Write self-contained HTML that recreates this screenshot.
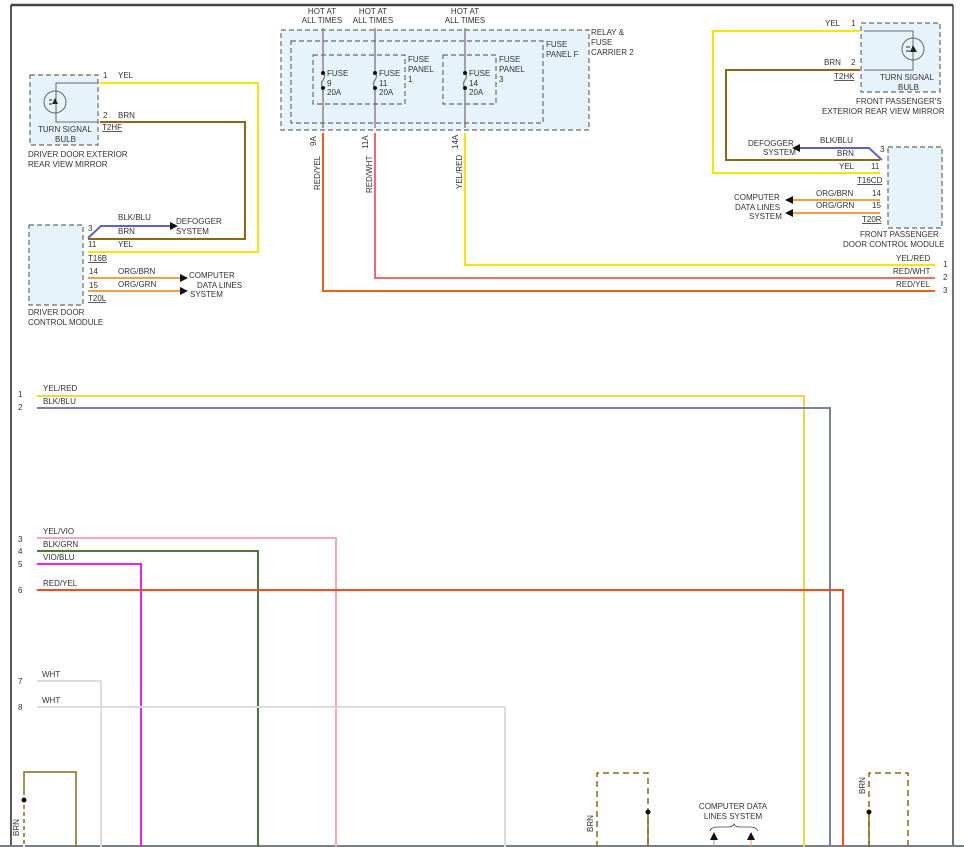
<!DOCTYPE html>
<html><head><meta charset="utf-8"><style>
html,body{margin:0;padding:0;background:#fff;}
svg{display:block;font-family:"Liberation Sans",sans-serif;font-size:8px;fill:#333;}
text{fill:#333;}
.bx{fill:#e6f3fb;stroke:#6a6a6a;stroke-width:1.2;stroke-dasharray:5,3;}
.bn{fill:none;stroke:#6a6a6a;stroke-width:1.2;stroke-dasharray:5,3;}
.w{fill:none;stroke-width:2;}
</style></head><body>
<svg width="964" height="847" viewBox="0 0 964 847" xmlns="http://www.w3.org/2000/svg">
<!-- frame -->
<line x1="11" y1="5" x2="953" y2="5" stroke="#444" stroke-width="2.5"/>
<line x1="11" y1="5" x2="11" y2="847" stroke="#222" stroke-width="1.5"/>
<line x1="953" y1="5" x2="953" y2="847" stroke="#444" stroke-width="1.5"/>
<line x1="0" y1="846" x2="964" y2="846" stroke="#7a8088" stroke-width="2"/>

<!-- Driver mirror -->
<rect class="bx" x="30" y="75" width="68" height="70"/>
<polyline points="98,83 56,83 56,122 98,122" fill="none" stroke="#666" stroke-width="1"/>
<circle cx="55" cy="102" r="11" fill="none" stroke="#666" stroke-width="1"/>
<polygon points="52,104 58,104 55,98" fill="#222"/><line x1="49" y1="100" x2="52" y2="100" stroke="#222"/><line x1="49" y1="104" x2="52" y2="104" stroke="#222"/>
<text x="38" y="132">TURN SIGNAL</text><text x="55" y="142">BULB</text>
<text x="28" y="157">DRIVER DOOR EXTERIOR</text><text x="28" y="167">REAR VIEW MIRROR</text>
<text x="103" y="78">1</text><text x="118" y="78">YEL</text>
<text x="103" y="118">2</text><text x="118" y="118">BRN</text>
<text x="102" y="130" text-decoration="underline">T2HF</text>
<polyline class="w" stroke="#f7e600" points="100,83 258,83 258,252 88,252"/>
<polyline class="w" stroke="#8a6a10" points="100,122 245,122 245,239 88,239"/>

<!-- Driver DCM -->
<rect class="bx" x="29" y="225" width="54" height="80"/>
<polyline class="w" stroke="#6060c0" points="88,238 101,226 170,226"/>
<polygon points="170,222 178,226 170,230" fill="#111"/>
<text x="88" y="231">3</text><text x="118" y="220">BLK/BLU</text><text x="118" y="234">BRN</text>
<text x="176" y="224">DEFOGGER</text><text x="176" y="234">SYSTEM</text>
<text x="88" y="247">11</text><text x="118" y="247">YEL</text>
<text x="88" y="261" text-decoration="underline">T16B</text>
<text x="89" y="274">14</text><text x="118" y="274">ORG/BRN</text>
<text x="89" y="288">15</text><text x="118" y="287">ORG/GRN</text>
<polyline class="w" stroke="#f5a040" points="88,278 180,278"/>
<polyline class="w" stroke="#f5a040" points="88,291 180,291"/>
<polygon points="180,274 188,278 180,282" fill="#111"/><polygon points="180,287 188,291 180,295" fill="#111"/>
<text x="189" y="278">COMPUTER</text><text x="197" y="288">DATA LINES</text><text x="190" y="297">SYSTEM</text>
<text x="88" y="301" text-decoration="underline">T20L</text>
<text x="28" y="315">DRIVER DOOR</text><text x="28" y="325">CONTROL MODULE</text>

<!-- Fuse carrier -->
<rect class="bx" x="281" y="30" width="308" height="100"/>
<rect class="bn" x="291" y="41" width="252" height="82"/>
<rect class="bn" x="313" y="55" width="92" height="49"/>
<rect class="bn" x="443" y="55" width="53" height="49"/>
<g stroke="#777" stroke-width="1.3" fill="none">
<line x1="323" y1="28" x2="323" y2="73"/><line x1="323" y1="88" x2="323" y2="128"/>
<line x1="375" y1="28" x2="375" y2="73"/><line x1="375" y1="88" x2="375" y2="128"/>
<line x1="465" y1="28" x2="465" y2="73"/><line x1="465" y1="88" x2="465" y2="128"/>
<path d="M323,73 q3,3 0,7 q-3,4 0,8"/><path d="M375,73 q3,3 0,7 q-3,4 0,8"/><path d="M465,73 q3,3 0,7 q-3,4 0,8"/></g>
<g fill="#111"><circle cx="323" cy="73" r="2"/><circle cx="323" cy="88" r="2"/><circle cx="375" cy="73" r="2"/><circle cx="375" cy="88" r="2"/><circle cx="465" cy="73" r="2"/><circle cx="465" cy="88" r="2"/></g>
<g text-anchor="middle"><text x="322" y="14">HOT AT</text><text x="322" y="23">ALL TIMES</text>
<text x="373" y="14">HOT AT</text><text x="373" y="23">ALL TIMES</text>
<text x="465" y="14">HOT AT</text><text x="465" y="23">ALL TIMES</text></g>
<text x="327" y="76">FUSE</text><text x="327" y="86">9</text><text x="327" y="95">20A</text>
<text x="379" y="76">FUSE</text><text x="379" y="86">11</text><text x="379" y="95">20A</text>
<text x="469" y="76">FUSE</text><text x="469" y="86">14</text><text x="469" y="95">20A</text>
<text x="408" y="62">FUSE</text><text x="408" y="72">PANEL</text><text x="408" y="82">1</text>
<text x="499" y="62">FUSE</text><text x="499" y="72">PANEL</text><text x="499" y="82">3</text>
<text x="546" y="47">FUSE</text><text x="546" y="57">PANEL F</text>
<text x="591" y="35">RELAY &amp;</text><text x="591" y="45">FUSE</text><text x="591" y="55">CARRIER 2</text>
<text transform="translate(316,146) rotate(-90)">9A</text>
<text transform="translate(320,190) rotate(-90)">RED/YEL</text>
<text transform="translate(368,149) rotate(-90)">11A</text>
<text transform="translate(372,193) rotate(-90)">RED/WHT</text>
<text transform="translate(458,149) rotate(-90)">14A</text>
<text transform="translate(462,189) rotate(-90)">YEL/RED</text>
<polyline class="w" stroke="#f4601a" points="323,133 323,291 935,291"/>
<polyline class="w" stroke="#f26a6a" points="375,133 375,278 935,278"/>
<polyline class="w" stroke="#f7e600" points="465,133 465,265 935,265"/>
<text x="896" y="261">YEL/RED</text><text x="943" y="267">1</text>
<text x="893" y="274">RED/WHT</text><text x="943" y="280">2</text>
<text x="896" y="287">RED/YEL</text><text x="943" y="293">3</text>

<!-- Right mirror -->
<rect class="bx" x="861" y="23" width="79" height="69"/>
<polyline points="864,31 913,31 913,70 864,70" fill="none" stroke="#666" stroke-width="1"/>
<circle cx="913" cy="49" r="11" fill="none" stroke="#666" stroke-width="1"/>
<polygon points="910,52 917,52 913,45" fill="#222"/><line x1="906" y1="47" x2="910" y2="47" stroke="#222"/><line x1="906" y1="51" x2="910" y2="51" stroke="#222"/>
<polyline class="w" stroke="#f7e600" points="860,31 713,31 713,173 880,173"/>
<polyline class="w" stroke="#8a6a10" points="860,70 726,70 726,160 880,160"/>
<text x="825" y="26">YEL</text><text x="851" y="26">1</text>
<text x="824" y="65">BRN</text><text x="851" y="65">2</text>
<text x="834" y="79" text-decoration="underline">T2HK</text>
<text x="880" y="80">TURN SIGNAL</text><text x="898" y="90">BULB</text>
<text x="856" y="104">FRONT PASSENGER'S</text><text x="822" y="114">EXTERIOR REAR VIEW MIRROR</text>

<!-- Right DCM -->
<rect class="bx" x="888" y="147" width="54" height="81"/>
<polyline class="w" stroke="#6060c0" points="882,160 869,148 800,148"/>
<polygon points="800,144 792,148 800,152" fill="#111"/>
<text x="820" y="143">BLK/BLU</text><text x="837" y="156">BRN</text><text x="839" y="169">YEL</text>
<text x="880" y="152">3</text><text x="871" y="169">11</text>
<text x="857" y="183" text-decoration="underline">T16CD</text>
<text x="748" y="146">DEFOGGER</text><text x="763" y="155">SYSTEM</text>
<polyline class="w" stroke="#f5a040" points="880,200 793,200"/>
<polyline class="w" stroke="#f5a040" points="880,213 793,213"/>
<polygon points="793,196 785,200 793,204" fill="#111"/><polygon points="793,209 785,213 793,217" fill="#111"/>
<text x="816" y="196">ORG/BRN</text><text x="872" y="196">14</text>
<text x="816" y="208">ORG/GRN</text><text x="872" y="208">15</text>
<text x="862" y="222" text-decoration="underline">T20R</text>
<text x="734" y="200">COMPUTER</text><text x="735" y="210">DATA LINES</text><text x="749" y="219">SYSTEM</text>
<text x="860" y="237">FRONT PASSENGER</text><text x="843" y="247">DOOR CONTROL MODULE</text>

<!-- middle wires -->
<polyline class="w" stroke="#f0d840" points="37,396 804,396 804,847"/>
<polyline class="w" stroke="#7a80a8" points="37,408 830,408 830,847"/>
<polyline class="w" stroke="#f4a8b8" points="37,538 336,538 336,847"/>
<polyline class="w" stroke="#4a7a3a" points="37,551 258,551 258,847"/>
<polyline class="w" stroke="#ee22ee" points="37,564 141,564 141,847"/>
<polyline class="w" stroke="#f05020" points="37,590 843,590 843,847"/>
<polyline class="w" stroke="#dcdcdc" points="37,681 101,681 101,847"/>
<polyline class="w" stroke="#dcdcdc" points="37,707 505,707 505,847"/>
<text x="18" y="397">1</text><text x="18" y="410">2</text><text x="18" y="542">3</text><text x="18" y="554">4</text><text x="18" y="567">5</text><text x="18" y="593">6</text><text x="18" y="684">7</text><text x="18" y="710">8</text>
<text x="43" y="391">YEL/RED</text><text x="43" y="404">BLK/BLU</text><text x="43" y="534">YEL/VIO</text><text x="43" y="547">BLK/GRN</text><text x="43" y="560">VIO/BLU</text><text x="43" y="586">RED/YEL</text><text x="42" y="677">WHT</text><text x="42" y="703">WHT</text>

<!-- bottom -->
<polyline points="24,847 24,772 76,772 76,847" fill="none" stroke="#8a6a10" stroke-width="1.5"/>
<line x1="24" y1="795" x2="24" y2="847" stroke="#fff" stroke-width="2" stroke-dasharray="3,4"/>
<circle cx="24" cy="800" r="2.5" fill="#111"/>
<text transform="translate(19,836) rotate(-90)">BRN</text>
<polyline points="597,847 597,773 648,773 648,847" fill="none" stroke="#8a6a10" stroke-width="1.5" stroke-dasharray="6,4"/>
<line x1="648" y1="812" x2="648" y2="847" stroke="#8a6a10" stroke-width="1.5"/>
<circle cx="648" cy="812" r="2.5" fill="#111"/>
<text transform="translate(593,832) rotate(-90)">BRN</text>
<polyline points="869,847 869,773 908,773 908,847" fill="none" stroke="#8a6a10" stroke-width="1.5" stroke-dasharray="6,4"/>
<line x1="869" y1="812" x2="869" y2="847" stroke="#8a6a10" stroke-width="1.5"/>
<circle cx="869" cy="812" r="2.5" fill="#111"/>
<text transform="translate(865,794) rotate(-90)">BRN</text>
<text x="733" y="809" text-anchor="middle">COMPUTER DATA</text><text x="733" y="819" text-anchor="middle">LINES SYSTEM</text>
<path d="M710,831 Q711,827 718,827 L728,827 Q733,827 734,824 Q735,827 740,827 L750,827 Q756,827 758,831" fill="none" stroke="#444" stroke-width="0.8"/>
<polygon points="710,840 718,840 714,832" fill="#111"/><polygon points="747,840 755,840 751,832" fill="#111"/>
<line x1="714" y1="840" x2="714" y2="847" stroke="#999"/><line x1="751" y1="840" x2="751" y2="847" stroke="#f5a040"/>
</svg>
</body></html>
